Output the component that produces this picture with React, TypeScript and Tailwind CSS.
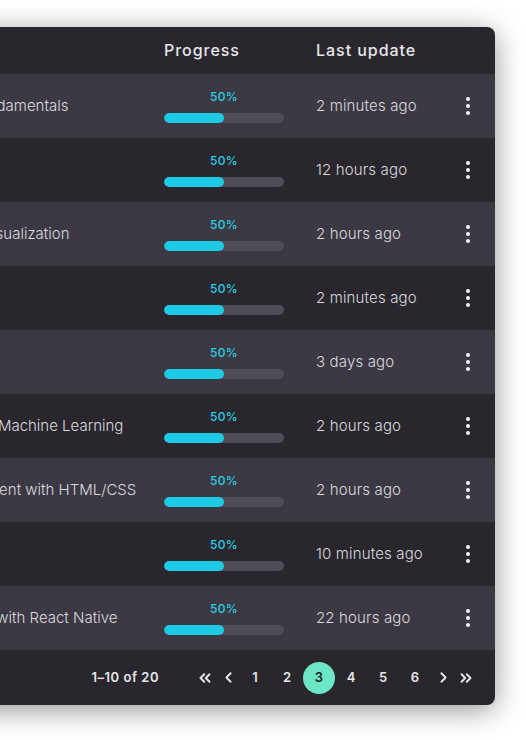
import { ChevronLeft, ChevronRight, ChevronsLeft, ChevronsRight } from 'lucide-react'

type Course = {
    id: number
    title: string
    progress: number
    updated: string
}

const courses: Course[] = [
    { id: 1, title: 'JavaScript Fundamentals', progress: 50, updated: '2 minutes ago' },
    { id: 2, title: 'Git Basics', progress: 50, updated: '12 hours ago' },
    { id: 3, title: 'Intro to Data Visualization', progress: 50, updated: '2 hours ago' },
    { id: 4, title: 'SQL Basics', progress: 50, updated: '2 minutes ago' },
    { id: 5, title: 'UI Design', progress: 50, updated: '3 days ago' },
    { id: 6, title: 'Introduction to Machine Learning', progress: 50, updated: '2 hours ago' },
    { id: 7, title: 'Web Development with HTML/CSS', progress: 50, updated: '2 hours ago' },
    { id: 8, title: 'Linux 101', progress: 50, updated: '10 minutes ago' },
    { id: 9, title: 'Creating Apps with React Native', progress: 50, updated: '22 hours ago' },
]

const pages = [1, 2, 3, 4, 5, 6]

function Kebab() {
    return (
        <button className="flex flex-col items-center gap-[3px] p-1">
            <span className="size-[4px] rounded-full bg-[#f2f2f4]" />
            <span className="size-[4px] rounded-full bg-[#f2f2f4]" />
            <span className="size-[4px] rounded-full bg-[#f2f2f4]" />
        </button>
    )
}

export default function App() {
    return (
        <div className="min-h-[740px] bg-white pt-[27px] overflow-hidden font-['Inter',sans-serif]">
            <div className="ml-[-145px] w-[640px] rounded-r-[8px] overflow-hidden bg-[#29272d] shadow-[0_5px_28px_rgba(0,0,0,0.42)]">
                <div className="grid grid-cols-[309px_152px_129px_50px] h-[47px] items-center pb-[1px] text-[16px] font-medium tracking-[0.06em] text-[#e6e6ea]">
                    <div className="pl-[38px]">Course</div>
                    <div>Progress</div>
                    <div>Last update</div>
                    <div />
                </div>
                {courses.map((course, i) => (
                    <div
                        key={course.id}
                        className={`grid grid-cols-[309px_152px_129px_50px] h-[64px] items-center ${i % 2 === 0 ? 'bg-[#3d3944]' : 'bg-[#29272d]'}`}
                    >
                        <div className="pl-[38px] text-[15px] font-light text-[#dad9de] whitespace-nowrap">{course.title}</div>
                        <div className="w-[120px] flex flex-col items-center gap-[9px]">
                            <span className="text-[12px] leading-[14px] font-medium tracking-[0.03em] text-[#27cfe8]">{course.progress}%</span>
                            <div className="w-[120px] h-[10px] rounded-full bg-[#4f4b57] overflow-hidden">
                                <div className="h-full rounded-full bg-[#1ecbe6]" style={{ width: `${course.progress}%` }} />
                            </div>
                        </div>
                        <div className="text-[15px] font-light tracking-[0.01em] text-[#dad9de] whitespace-nowrap">{course.updated}</div>
                        <div className="flex justify-start pl-[17px]">
                            <Kebab />
                        </div>
                    </div>
                ))}
                <div className="h-[55px] flex items-center justify-end pr-[18px] text-[#e6e6ea]">
                    <span className="text-[13px] font-semibold tracking-[0.04em] mr-[34px]">1–10 of 20</span>
                    <div className="flex items-center">
                        <button className="w-[24px] h-[32px] flex items-center justify-center">
                            <ChevronsLeft size={18} strokeWidth={2.6} />
                        </button>
                        <button className="w-[22px] h-[32px] flex items-center justify-center">
                            <ChevronLeft size={17} strokeWidth={2.6} />
                        </button>
                        {pages.map(p => (
                            <button
                                key={p}
                                className={`size-[32px] rounded-full flex items-center justify-center text-[13px] font-semibold ${p === 3 ? 'bg-[#6ce6c5] text-[#1f1d22]' : 'text-[#e6e6ea]'}`}
                            >
                                {p}
                            </button>
                        ))}
                        <button className="w-[24px] h-[32px] flex items-center justify-center">
                            <ChevronRight size={17} strokeWidth={2.6} />
                        </button>
                        <button className="w-[22px] h-[32px] flex items-center justify-center">
                            <ChevronsRight size={18} strokeWidth={2.6} />
                        </button>
                    </div>
                </div>
            </div>
        </div>
    )
}
